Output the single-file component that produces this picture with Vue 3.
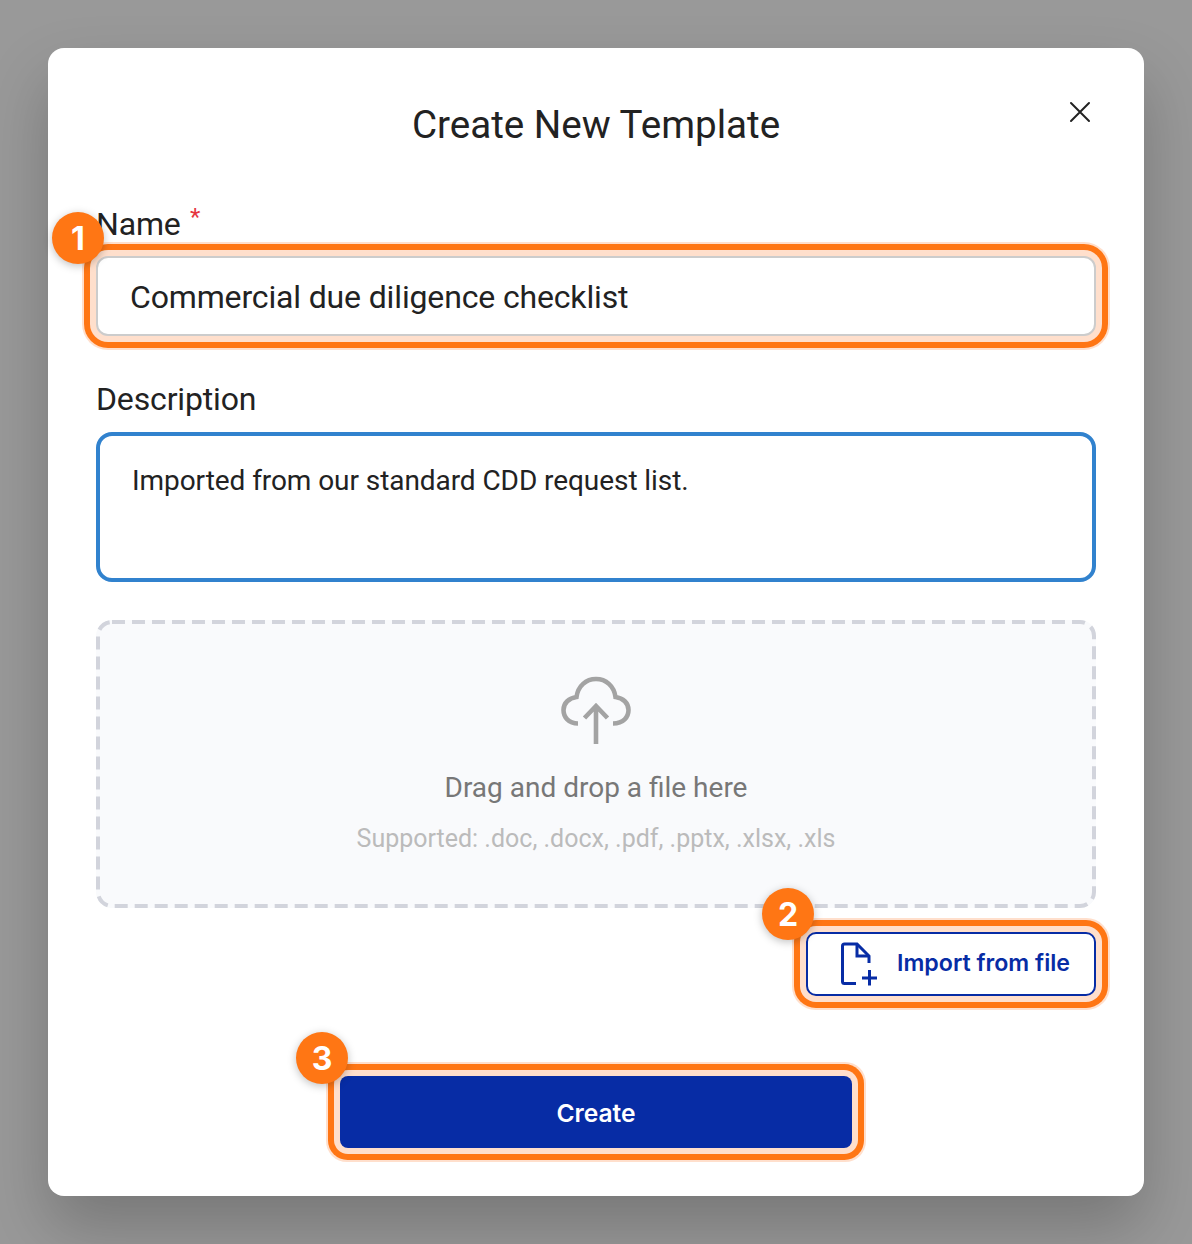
<script setup>
const formats = 'Supported: .doc, .docx, .pdf, .pptx, .xlsx, .xls'
</script>

<template>
  <div class="backdrop">
    <div class="modal">
      <header class="head">
        <h1 class="title">Create New Template</h1>
        <button class="close" aria-label="Close">
          <svg width="24" height="24" viewBox="0 0 24 24" fill="none" stroke="#222" stroke-width="2" stroke-linecap="round">
            <path d="M3 3 L21 21 M21 3 L3 21" />
          </svg>
        </button>
      </header>

      <div class="field name-field">
        <label class="label">Name <span class="req">*</span></label>
        <div class="anchor">
          <span class="badge">1</span>
          <div class="input hl">Commercial due diligence checklist</div>
        </div>
      </div>

      <div class="field desc-field">
        <label class="label desc-label">Description</label>
        <div class="textarea">Imported from our standard CDD request list.</div>
      </div>

      <div class="drop">
        <svg class="dash" width="1000" height="288" viewBox="0 0 1000 288" fill="none">
          <rect x="2" y="2" width="996" height="284" rx="14" stroke="#d2d4dc" stroke-width="4" stroke-dasharray="13 7" />
        </svg>
        <svg class="cloud" width="72" height="72" viewBox="0 0 72 72" fill="none" stroke="#a3a3a3" stroke-width="4.6">
          <path d="M18 48.5 C8.5 48.5 3.5 42 3.5 35 C3.5 28 9 23 16.5 22 C18 11 26 4 36 4 C46 4 54 11 55.5 22 C63 23 68.5 28 68.5 35 C68.5 42 63.5 48.5 53 48.5" />
          <path d="M36 69 V32 M24.5 43 L36 31 L47.5 43" />
        </svg>
        <div class="drop-main">Drag and drop a file here</div>
        <div class="drop-sub">{{ formats }}</div>
      </div>

      <div class="import-row">
        <div class="anchor">
          <span class="badge">2</span>
          <button class="import hl">
            <svg class="file" width="38" height="44" viewBox="0 0 38 44" fill="none" stroke="#072ca5" stroke-width="3">
              <path d="M16 41.5 H4.5 Q2.5 41.5 2.5 39.5 V4 Q2.5 2 4.5 2 H17 L29 14 V21" />
              <path d="M17 2 V14 H29" />
              <path d="M22 36 H37 M29.5 28 V43.5" />
            </svg>
            <span class="import-text">Import from file</span>
          </button>
        </div>
      </div>

      <div class="create-row">
        <div class="anchor">
          <span class="badge">3</span>
          <button class="create hl">Create</button>
        </div>
      </div>
    </div>
  </div>
</template>

<style>
html, body { margin: 0; padding: 0; }
</style>

<style scoped>
.backdrop {
  box-sizing: border-box;
  width: 1192px;
  height: 1244px;
  padding: 48px;
  background: #999;
  overflow: hidden;
}
.modal {
  box-sizing: border-box;
  height: 1148px;
  padding: 48px;
  background: #fff;
  border-radius: 16px;
  box-shadow: 0 32px 64px rgba(0, 0, 0, 0.22);
  font-family: Roboto, sans-serif;
  color: #222;
}
.head {
  position: relative;
  display: flex;
  justify-content: center;
  height: 56px;
}
.title {
  margin: 0;
  font-size: 38.6px;
  line-height: 58px;
  font-weight: 400;
}
.close {
  position: absolute;
  right: 4px;
  top: 4px;
  padding: 0;
  border: 0;
  background: none;
  display: flex;
}
.field { display: flex; flex-direction: column; }
.name-field { margin-top: 45px; }
.desc-field { margin-top: 43px; }
.label {
  font-size: 32px;
  line-height: 40px;
  margin-bottom: 12px;
  letter-spacing: -0.15px;
}
.desc-label { margin-bottom: 13px; }
.req {
  color: #e5343f;
  font-size: 24px;
  vertical-align: 10px;
  margin-left: 1.5px;
}
.anchor { position: relative; }
.input {
  box-sizing: border-box;
  height: 80px;
  padding: 0 32px;
  border: 2px solid #ccc;
  border-radius: 12px;
  font-size: 32px;
  letter-spacing: -0.15px;
  line-height: 78px;
  background: #fff;
}
.hl {
  box-shadow: 0 0 0 6px #ffdfcc, 0 0 0 12px #ff7614, 0 0 0 14px #ffdfcc;
}
.textarea {
  box-sizing: border-box;
  height: 150px;
  padding: 25px 32px;
  border: 4px solid #3182ce;
  border-radius: 16px;
  font-size: 28px;
  letter-spacing: -0.07px;
  line-height: 40px;
}
.drop {
  position: relative;
  box-sizing: border-box;
  height: 288px;
  margin-top: 38px;
  padding-top: 55px;
  border-radius: 16px;
  background: #f9fafc;
  display: flex;
  flex-direction: column;
  align-items: center;
}
.dash {
  position: absolute;
  left: 0;
  top: 0;
}
.cloud { display: block; flex: none; }
.drop-main {
  margin-top: 21px;
  font-size: 28px;
  line-height: 40px;
  color: #777;
}
.drop-sub {
  margin-top: 15px;
  font-size: 25px;
  line-height: 32px;
  color: #bbb;
}
.import-row {
  display: flex;
  justify-content: flex-end;
  margin-top: 24px;
}
.import {
  box-sizing: border-box;
  width: 290px;
  height: 64px;
  display: flex;
  align-items: center;
  gap: 19px;
  padding: 0 0 2px 32px;
  background: #fff;
  border: 2px solid #072ca5;
  border-radius: 10px;
  color: #072ca5;
  font-family: Inter, sans-serif;
  font-size: 23.2px;
  font-weight: 600;
}
.file { flex: none; position: relative; top: 1px; }
.import-text { white-space: nowrap; }
.create-row {
  display: flex;
  justify-content: center;
  margin-top: 80px;
}
.create {
  display: block;
  width: 512px;
  height: 72px;
  padding: 2px 0 0;
  border: 0;
  border-radius: 8px;
  background: #072ca5;
  color: #fff;
  font-family: Inter, sans-serif;
  font-size: 24.6px;
  font-weight: 600;
}
.badge {
  position: absolute;
  z-index: 2;
  left: -44px;
  top: -44px;
  width: 52px;
  height: 52px;
  border-radius: 50%;
  background: #ff7614;
  color: #fff;
  font-family: Inter, sans-serif;
  font-size: 32px;
  font-weight: 700;
  line-height: 53px;
  text-align: center;
  box-shadow: 0 2px 8px rgba(0, 0, 0, 0.25);
}
</style>
